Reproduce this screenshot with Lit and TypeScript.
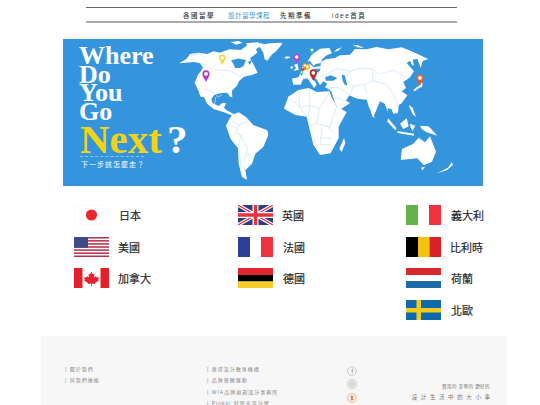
import { LitElement, html, css, svg } from "lit";
import { customElement } from "lit/decorators.js";

function pin(x: number, tip: number, r: number, c: string) {
  const cy = tip - r * 2.25;
  return svg`<path d="M${x} ${tip} C${x - r * .5} ${cy + r * 1.2} ${x - r} ${cy + r * .6} ${x - r} ${cy} A${r} ${r} 0 1 1 ${x + r} ${cy} C${x + r} ${cy + r * .6} ${x + r * .5} ${cy + r * 1.2} ${x} ${tip}Z" fill="${c}"/><circle cx="${x}" cy="${cy}" r="${r * .52}" fill="#fff"/>`;
}

const worldMap = svg`
<svg class="map" viewBox="63 39 420 147" aria-hidden="true">
  <g transform="translate(170 40) scale(.3333)" fill="#fff">
    <path d="M28 70 L50 56 L60 42 L85 38 L112 42 L130 34 L150 38 L178 28 L212 30 L238 12 L262 8 L282 12 L258 28 L262 38 L240 55 L250 72 L263 98 L248 104 L222 110 L208 122 L200 138 L186 152 L187 172 L180 170 L172 158 L150 160 L132 165 L124 178 L128 190 L146 198 L158 188 L168 190 L162 204 L172 212 L192 222 L185 226 L160 216 L132 208 L112 192 L102 172 L92 170 L84 150 L74 128 L84 104 L100 84 L90 70 L72 66 Z"/>
    <path d="M266 16 L300 10 L336 8 L335 14 L318 34 L305 44 L292 62 L284 58 L280 38 Z"/>
    <path d="M182 6 L205 3 L218 8 L198 14Z M228 10 L268 6 L252 16 L232 18Z"/>
  </g>
  <path fill="#3595dc" d="M231 60.5 L238 58.5 L246 60 L243.5 66 L240 68 L235 68 L233.5 64Z M248 62 L252 60 L250 65Z"/>
  <g fill="none" stroke="#cfe3f5" stroke-width=".7">
    <path d="M191 56 L200 53 L204 58 M201 63 L215 69.5 L231 71 L240 76 L246 72 M205 89 L212 91 L218 97 L222 95 M201 68 L205 70 M216 97 L214 106"/>
  </g>
  <g transform="translate(210 105) scale(.3333)" fill="#fff">
    <path d="M48 62 L58 42 L66 30 L86 22 L108 36 L130 60 L172 76 L175 90 L160 126 L136 146 L126 176 L106 196 L111 224 L96 216 L86 176 L84 130 L62 102Z"/>
    <g fill="none" stroke="#cfe3f5" stroke-width="2.2">
      <path d="M66 50 L86 60 L78 84 L92 90 L112 128 L108 150 L122 150 M86 60 L110 50 L108 36 M92 90 L86 130 L92 175 L104 195 M108 150 L100 170 M54 62 L78 68"/>
    </g>
  </g>
  <g transform="translate(270 38) scale(.3333)">
    <g fill="#fff">
      <path d="M42 212 L55 176 L85 156 L116 150 L140 162 L178 160 L186 180 L200 206 L230 222 L206 266 L206 300 L182 346 L150 351 L130 320 L116 262 L110 236 L76 231Z"/>
      <path d="M208 332 L222 300 L226 316 L215 342Z"/>
      <path d="M70 140 L66 122 L85 118 L92 105 L105 96 L120 90 L118 76 L130 88 L152 84 L152 72 L168 64 L195 60 L210 52 L240 50 L255 33 L290 34 L320 27 L355 34 L395 28 L430 42 L475 63 L458 68 L452 90 L442 62 L425 66 L410 75 L432 100 L420 118 L410 125 L400 132 L408 150 L395 160 L412 172 L395 196 L375 208 L385 226 L370 222 L360 200 L352 206 L354 224 L345 198 L330 190 L310 238 L296 205 L290 185 L262 182 L238 172 L228 188 L240 195 L206 218 L195 195 L184 160 L165 146 L172 138 L160 130 L150 142 L140 124 L126 114 L140 140 L132 150 L112 120 L100 122 L92 140Z"/>
      <path d="M112 72 L125 50 L150 32 L178 30 L186 46 L170 52 L158 62 L150 76 L138 78 L130 84 L120 68Z"/>
      <path d="M72 82 L82 74 L86 96 L70 98 L78 90Z M62 86 L68 84 L68 92 L62 92Z M42 60 L50 55 L62 57 L52 62Z"/>
      <path d="M192 42 L200 34 L216 28 L204 38Z M248 20 L265 22 L282 30 L262 28Z"/>
      <path d="M418 62 L428 58 L431 85 L424 78Z M448 62 L468 62 L458 70 L452 80Z"/>
      <path d="M430 156 L448 142 L452 128 L458 135 L456 146 L444 152 L434 160Z M447 110 L458 112 L452 122Z"/>
    </g>
    <path fill="#3595dc" d="M165 118 L182 112 L202 120 L190 128 L168 128Z M215 110 L224 112 L232 142 L224 140 L218 128Z M133 92 L152 92 L146 104 L134 100Z"/>
    <g fill="none" stroke="#cfe3f5" stroke-width="2.2">
      <path d="M55 176 L90 208 L110 236 M85 156 L90 208 L120 202 L118 150 M118 202 L148 212 L180 160 M148 212 L140 256 L116 262 M140 256 L180 268 L200 206 M155 270 L150 320 L182 320 M120 204 L114 236 M175 268 L196 290 M150 300 L186 300"/>
      <path d="M100 122 L122 122 M92 105 L126 112 M138 118 L165 112 L200 92 L240 100 L270 90 L305 92 L330 108 L372 96 L406 118 L400 132 M240 100 L228 125 L250 145 L282 140 L292 170 M305 92 L310 128 L350 140 L372 172 M282 140 L310 128 M250 145 L240 172 M166 146 L210 150 L240 172 M200 180 L230 190 M372 172 L385 205"/>
    </g>
  </g>
  <g transform="translate(370 105) scale(.3333)" fill="#fff">
    <path d="M92 165 L96 132 L130 116 L146 98 L165 112 L180 94 L198 140 L186 170 L162 181 L142 160Z"/>
    <path d="M152 188 L165 185 L158 196Z M200 205 L234 188 L245 172 L249 180 L230 196Z"/>
    <path d="M54 40 L80 70 L76 76 L52 50Z M80 78 L132 86 L132 92 L84 84Z M90 56 L110 40 L116 64 L100 72Z M120 56 L136 62 L128 78 L122 68Z M150 62 L176 64 L202 92 L170 82 L155 72Z M116 0 L128 8 L138 36 L128 28Z M3 18 L10 24 L14 38 L8 36Z"/>
    <path d="M45 0 L86 0 L84 24 L70 26 L64 12 L52 10Z"/>
  </g>
  ${pin(206, 82, 3.6, "#b23cc2")}
  ${pin(222.3, 65, 3.2, "#f2d64b")}
  ${pin(312, 55.5, 2.4, "#3bbf9a")}
  ${pin(296.7, 64.5, 3.3, "#a94fd1")}
  ${pin(301.7, 76, 1.7, "#3bbf9a")}
  ${pin(302.7, 71, 1.6, "#d8402f")}
  ${pin(304.7, 70.5, 2.3, "#e8823a")}
  ${pin(307.5, 71.5, 2.2, "#f3cf3f")}
  ${pin(313.3, 81, 3.6, "#c0272d")}
  ${pin(420, 86, 3.6, "#e2602f")}
</svg>`;

const flags: Record<string, unknown> = {
  jp: svg`<rect width="35" height="20" fill="#fff" stroke="#eee" stroke-width=".6"/><circle cx="17.5" cy="10" r="5.6" fill="#e8262c"/>`,
  us: svg`<rect width="35" height="20" fill="#fff"/>${[0, 1, 2, 3, 4, 5, 6].map((i) => svg`<rect y="${i * 3.08}" width="35" height="1.54" fill="#b5324a"/>`)}<rect width="14" height="10.8" fill="#3d4a8a"/>`,
  ca: svg`<rect width="35" height="20" fill="#fff"/><rect width="8.5" height="20" fill="#e5202a"/><rect x="26.5" width="8.5" height="20" fill="#e5202a"/><path d="M17.5 3.5 L19 6.5 L20.5 5.8 L20 9.5 L22 8 L22.5 9.5 L25 9.2 L24.2 11.5 L25 12.2 L21 15 L21.3 16 L17.9 15.6 L17.9 18 L17.1 18 L17.1 15.6 L13.7 16 L14 15 L10 12.2 L10.8 11.5 L10 9.2 L12.5 9.5 L13 8 L15 9.5 L14.5 5.8 L16 6.5Z" fill="#e5202a"/>`,
  uk: svg`<rect width="35" height="20" fill="#2f3f7e"/><path d="M0 0 L35 20 M35 0 L0 20" stroke="#fff" stroke-width="3.6"/><path d="M0 0 L35 20 M35 0 L0 20" stroke="#e8333f" stroke-width="1.2"/><path d="M17.5 0 V20 M0 10 H35" stroke="#fff" stroke-width="6"/><path d="M17.5 0 V20 M0 10 H35" stroke="#e8333f" stroke-width="3.4"/>`,
  fr: svg`<rect width="12" height="20" fill="#2e3f97"/><rect x="12" width="11" height="20" fill="#fff"/><rect x="23" width="12" height="20" fill="#ee3340"/>`,
  de: svg`<rect width="35" height="7" fill="#e0262c"/><rect y="7" width="35" height="6.5" fill="#000"/><rect y="13.5" width="35" height="6.5" fill="#f4ce24"/>`,
  it: svg`<rect width="12" height="20" fill="#62b34a"/><rect x="23" width="12" height="20" fill="#ee3340"/>`,
  be: svg`<rect width="12" height="20" fill="#000"/><rect x="12" width="11.5" height="20" fill="#f2c314"/><rect x="23.5" width="11.5" height="20" fill="#d92128"/>`,
  nl: svg`<rect width="35" height="7" fill="#d9272e"/><rect y="13" width="35" height="7" fill="#1c6aa8"/>`,
  se: svg`<rect width="35" height="20" fill="#0f6aab"/><rect x="10.5" width="4.5" height="20" fill="#f5ca1e"/><rect y="8" width="35" height="4.5" fill="#f5ca1e"/>`,
};

const columns = [
  [["jp", "日本", 0], ["us", "美國", -1], ["ca", "加拿大", -1]],
  [["uk", "英國", -1], ["fr", "法國", 0], ["de", "德國", 0]],
  [["it", "義大利", 0], ["be", "比利時", -1], ["nl", "荷蘭", 0], ["se", "北歐", 0]],
] as [string, string, number][][];

@customElement("app-root")
export class AppRoot extends LitElement {
  static styles = css`
    :host { display: block; position: relative; width: 540px; height: 405px; overflow: hidden; background: #fff; font-family: "Liberation Sans", "Noto Sans CJK TC", sans-serif; }
    .nav { margin: 7px 0 0 86px; width: 371px; height: 16px; box-sizing: border-box; border-top: 1px solid #666; border-bottom: 2px solid #aaa; display: flex; align-items: center; padding-left: 97px; font-size: 6.5px; font-weight: 500; color: #333; letter-spacing: 1.5px; }
    .nav span { white-space: nowrap; }
    .nav .a { margin-right: 13px; }
    .nav .b { margin-right: 10px; color: #3f9bdc; font-weight: 400; letter-spacing: .5px; }
    .nav .c { margin-right: 20px; }
    .hero { position: relative; margin: 16px 0 0 63px; width: 420px; height: 147px; box-sizing: border-box; background: #3595dc; color: #fff; padding: 7px 0 0 16px; font-family: "Liberation Serif", "Noto Sans CJK TC", serif; overflow: hidden; }
    .map { position: absolute; inset: 0; width: 420px; height: 147px; filter: blur(.25px); }
    .big { position: relative; font-size: 26px; font-weight: 700; line-height: 18.4px; }
    .big div:first-child { line-height: 20px; }
    .next { position: relative; display: flex; align-items: baseline; font-size: 41px; font-weight: 700; line-height: 33px; margin: 2px 0 0 1px; color: #f2d414; }
    .next i { font-style: normal; color: #fff; margin-left: 5px; }
    .dash { position: relative; width: 64px; border-top: 1px dashed #8cc4ee; margin: 0 0 0 1px; }
    .sub { position: relative; font-size: 7px; letter-spacing: 1px; margin: 4px 0 0 2px; line-height: 9px; }
    .flags { margin: 13px 0 0 74px; display: grid; grid-template-columns: 164px 168px auto; }
    .col { display: flex; flex-direction: column; }
    .item { display: flex; align-items: center; height: 31.7px; gap: 10px; font-size: 11px; color: #222; -webkit-text-stroke: .15px #222; }
    .item svg { width: 35px; height: 20px; display: block; flex: none; }
    .foot { position: absolute; left: 41px; top: 336px; width: 466px; height: 69px; overflow: hidden; background: #f7f7f7; box-sizing: border-box; padding: 28px 17px 0 24px; display: flex; font-size: 5px; letter-spacing: 1px; color: #8a8a8a; line-height: 11.4px; }
    .foot .l1 { flex: none; width: 142px; }
    .foot .l2 { flex: none; width: 140px; white-space: nowrap; }
    .soc { flex: none; width: 60px; display: flex; flex-direction: column; gap: 3.5px; padding: 1.5px 0 0; }
    .soc svg { display: block; width: 10px; height: 10px; }
    .tag { flex: 1; text-align: right; white-space: nowrap; padding-top: 17px; color: #777; }
    .tag .t { font-size: 4.5px; letter-spacing: .45px; margin-bottom: 0; }
    .tag .m { font-size: 5.5px; letter-spacing: 3.6px; margin-right: -3.6px; }
  `;

  render() {
    return html`
      <div class="nav">
        <span class="a">各國留學</span><span class="b">設計留學課程</span><span class="c">先期準備</span><span>idee首頁</span>
      </div>
      <div class="hero">
        ${worldMap}
        <div class="big"><div>Where</div><div>Do</div><div>You</div><div>Go</div></div>
        <div class="next">Next<i>?</i></div>
        <div class="dash"></div>
        <div class="sub">下一步該怎麼走？</div>
      </div>
      <div class="flags">
        ${columns.map((col) => html`<div class="col">
          ${col.map(([f, name, off]) => html`<div class="item">
            <svg viewBox="0 0 35 20">${flags[f]}</svg>
            <span style="margin-left:${off}px">${name}</span>
          </div>`)}
        </div>`)}
      </div>
      <div class="foot">
        <div class="l1"><div>| 關於我們</div><div>| 與我們連絡</div></div>
        <div class="l2"><div>| 意得設計教育機構</div><div>| 品牌覺醒運動</div><div>| WIA品牌規劃設計事務所</div><div>| Pinkoi 好時光設計館</div></div>
        <div class="soc">
          <svg viewBox="0 0 10 10"><circle cx="5" cy="5" r="4.4" fill="none" stroke="#aaa" stroke-width=".6"/><path d="M5.6 7.6V5.2H6.3V4.4H5.6V3.8C5.6 3.4 5.8 3.3 6.4 3.3V2.6C5.3 2.5 4.8 2.9 4.8 3.7V4.4H4.1V5.2H4.8V7.6Z" fill="#aaa"/></svg>
          <svg viewBox="0 0 10 10"><circle cx="5" cy="5" r="4.4" fill="none" stroke="#aaa" stroke-width=".6"/><rect x="2.8" y="2.8" width="4.4" height="4.4" rx="1" fill="none" stroke="#aaa" stroke-width=".6"/><circle cx="5" cy="5" r="1" fill="none" stroke="#aaa" stroke-width=".5"/></svg>
          <svg viewBox="0 0 10 10"><circle cx="5" cy="5" r="4.4" fill="none" stroke="#ef9a6b" stroke-width=".7"/><path d="M3.8 2.6V7.4H5.4C6.7 7.4 6.9 5.4 5.6 5C6.5 4.6 6.3 2.6 5.2 2.6Z" fill="#ee7f45"/></svg>
        </div>
        <div class="tag">
          <div class="t">實用的 美學的 節好的</div>
          <div class="m">設計生活中的大小事</div>
        </div>
      </div>
    `;
  }
}
